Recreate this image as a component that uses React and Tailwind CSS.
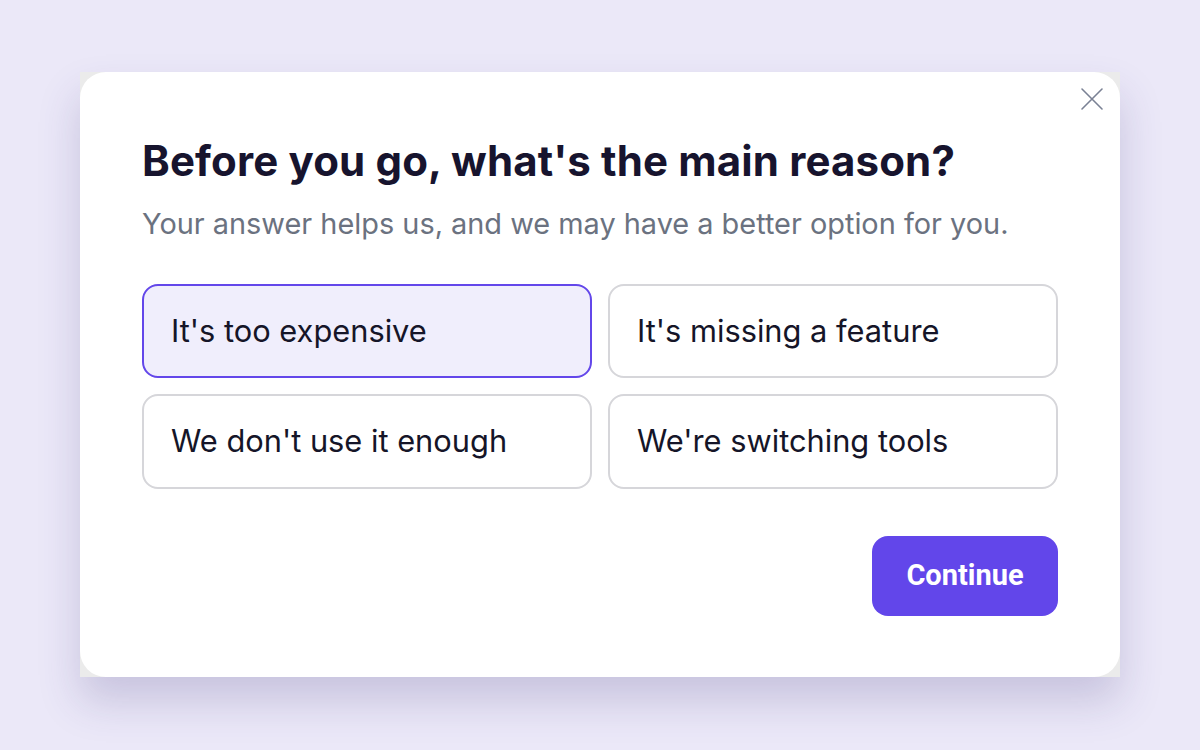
import React, { useState } from "react";

const options = [
  "It's too expensive",
  "It's missing a feature",
  "We don't use it enough",
  "We're switching tools",
];

export default function App() {
  const [selected, setSelected] = useState(0);
  return (
    <div
      className="w-full h-[750px] bg-[#ebe8f8] flex flex-col items-center pt-[72px]"
      style={{ fontFamily: "Inter, 'Noto Sans', sans-serif" }}
    >
      <div className="w-[1040px] h-[605px] bg-[#ebebeb] shadow-[0_24px_40px_rgba(60,50,120,0.2)]">
        <div className="relative w-full h-full bg-white rounded-[26px] px-[62px] pt-[212px] pb-[61px] flex flex-col">
          <button className="absolute right-[15px] top-[14px] w-[26px] h-[26px] flex items-center justify-center text-[#7a8194]">
            <svg width="24" height="24" viewBox="0 0 24 24" fill="none" stroke="currentColor" strokeWidth="1.6" strokeLinecap="round">
              <path d="M2 2L22 22M22 2L2 22" />
            </svg>
          </button>
          <div className="absolute left-[62px] top-[64px] right-[40px]">
            <h1 className="text-[42px] leading-[50px] font-bold text-[#17142e] tracking-[0.15px] whitespace-nowrap">
              Before you go, what's the main reason?
            </h1>
            <p className="mt-[20px] text-[28.9px] leading-[36px] text-[#6b7280] whitespace-nowrap">
              Your answer helps us, and we may have a better option for you.
            </p>
          </div>
          <div className="grid grid-cols-2 grid-rows-[94px_95px] gap-[16px]">
            {options.map((o, i) => (
              <button
                key={o}
                onClick={() => setSelected(i)}
                className={
                  i === selected
                    ? "rounded-[16px] border-2 border-[#6347ea] bg-[#f0eefc] text-left pl-[27px] text-[30.8px] text-[#151528] whitespace-nowrap"
                    : "rounded-[16px] border-2 border-[#d6d6da] bg-white text-left pl-[27px] text-[30.8px] text-[#151528] whitespace-nowrap"
                }
              >
                {o}
              </button>
            ))}
          </div>
          <div className="mt-auto flex justify-end">
            <button
              className="w-[186px] h-[80px] rounded-[16px] bg-[#6246ea] text-white text-[29px] font-bold"
              style={{ fontFamily: "Roboto, 'Liberation Sans', sans-serif" }}
            >
              Continue
            </button>
          </div>
        </div>
      </div>
    </div>
  );
}
